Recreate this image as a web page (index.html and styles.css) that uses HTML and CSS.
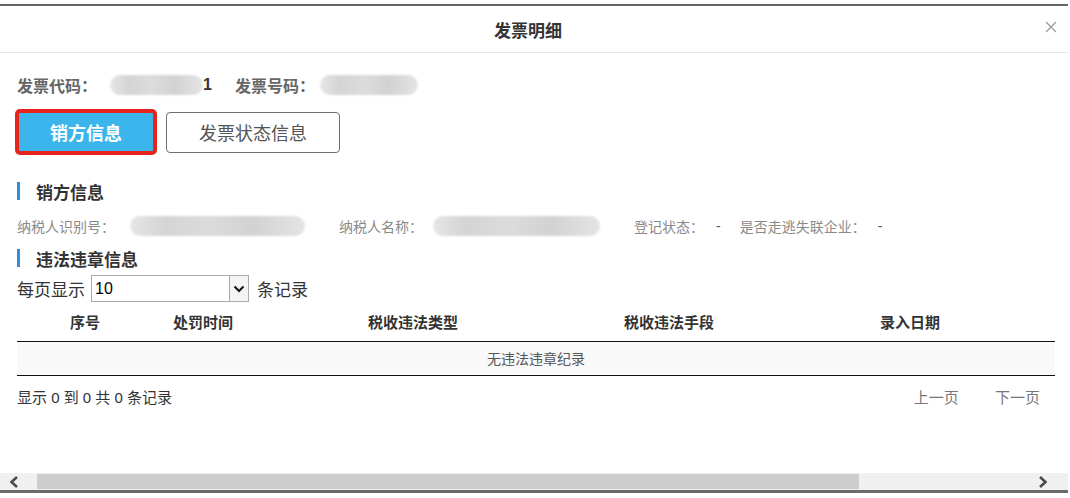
FILE: index.html
```html
<!DOCTYPE html>
<html lang="zh-CN">
<head>
    <meta charset="UTF-8">
    <meta name="viewport" content="width=device-width, initial-scale=1.0">
    <title>发票明细</title>
    <link rel="stylesheet" href="styles.css">
</head>
<body>
    <div class="page">
        <div class="dialog">
            <div class="dialog-header">
                <h2 class="dialog-title">发票明细</h2>
                <span class="dialog-close">
                    <svg width="12" height="12" viewBox="0 0 12 12"><path d="M1 1L11 11M11 1L1 11" stroke="#9a9a9a" stroke-width="1.3" fill="none"/></svg>
                </span>
            </div>

            <div class="dialog-body">
                <div class="code-row">
                    <span class="code-label">发票代码：</span>
                    <span class="mask mask-code"></span>
                    <span class="code-tail">1</span>
                    <span class="code-label code-label-2">发票号码：</span>
                    <span class="mask mask-number"></span>
                </div>

                <div class="tabs">
                    <button class="tab tab-active">销方信息</button>
                    <button class="tab">发票状态信息</button>
                </div>

                <div class="section-title">销方信息</div>
                <div class="info-row">
                    <span class="info-label">纳税人识别号：</span>
                    <span class="mask mask-taxid"></span>
                    <span class="info-label">纳税人名称：</span>
                    <span class="mask mask-name"></span>
                    <span class="info-label">登记状态：</span>
                    <span class="info-value">-</span>
                    <span class="info-label">是否走逃失联企业：</span>
                    <span class="info-value">-</span>
                </div>

                <div class="section-title section-title-2">违法违章信息</div>
                <div class="page-size">
                    <span>每页显示</span>
                    <div class="select">
                        <span class="select-value">10</span>
                        <span class="select-arrow">
                            <svg width="12" height="8" viewBox="0 0 12 8"><path d="M1.5 1.5L6 6L10.5 1.5" stroke="#111" stroke-width="2" fill="none"/></svg>
                        </span>
                    </div>
                    <span>条记录</span>
                </div>

                <table class="grid">
                    <colgroup>
                        <col style="width: 136px">
                        <col style="width: 100px">
                        <col style="width: 320px">
                        <col style="width: 192px">
                        <col style="width: 290px">
                    </colgroup>
                    <thead>
                        <tr>
                            <th>序号</th>
                            <th>处罚时间</th>
                            <th>税收违法类型</th>
                            <th>税收违法手段</th>
                            <th>录入日期</th>
                        </tr>
                    </thead>
                    <tbody>
                        <tr>
                            <td colspan="5" class="empty">无违法违章纪录</td>
                        </tr>
                    </tbody>
                </table>

                <div class="grid-footer">
                    <span class="grid-info">显示 0 到 0 共 0 条记录</span>
                    <span class="pager">
                        <a class="pager-link">上一页</a>
                        <a class="pager-link">下一页</a>
                    </span>
                </div>
            </div>

            <div class="hscroll">
                <span class="hscroll-btn">
                    <svg width="10" height="12" viewBox="0 0 10 12"><path d="M8 1L2.5 6L8 11" stroke="#4a4a4a" stroke-width="2.6" fill="none"/></svg>
                </span>
                <span class="hscroll-thumb"></span>
                <span class="hscroll-space"></span>
                <span class="hscroll-btn hscroll-btn-right">
                    <svg width="10" height="12" viewBox="0 0 10 12"><path d="M2 1L7.5 6L2 11" stroke="#4a4a4a" stroke-width="2.6" fill="none"/></svg>
                </span>
            </div>
        </div>
    </div>
</body>
</html>
```

FILE: styles.css
```css
* {
    box-sizing: border-box;
}

body {
    margin: 0;
    background: #fff;
    font-family: "Liberation Sans", "Noto Sans CJK SC", sans-serif;
    color: #333;
}

.page {
    padding-top: 4px;
}

.dialog {
    width: 1068px;
    height: 489px;
    display: flex;
    flex-direction: column;
    background: #fff;
    border-top: 2px solid #666;
    border-bottom: 3px solid #6a6a6a;
}

.dialog-header {
    position: relative;
    height: 47px;
    padding-right: 12px;
    border-bottom: 1px solid #e5e5e5;
    display: flex;
    align-items: center;
    justify-content: center;
}

.dialog-title {
    margin: 0;
    font-size: 17px;
    font-weight: bold;
    color: #333;
}

.dialog-close {
    position: absolute;
    right: 11px;
    top: 15px;
    width: 12px;
    height: 12px;
    display: flex;
}

.dialog-body {
    flex: 1;
    padding: 0 13px 0 17px;
}

/* 发票代码 / 号码 */
.code-row {
    margin-top: 20px;
    height: 24px;
    display: flex;
    align-items: center;
    font-size: 16px;
    font-weight: bold;
    color: #666;
}

.code-tail {
    color: #333;
}

.code-label-2 {
    margin-left: 23px;
}

.mask {
    display: inline-block;
    height: 20px;
    border-radius: 10px;
    background: linear-gradient(90deg, #e6e6e6 0%, #d4d4d4 20%, #dcdcdc 45%, #d2d2d2 70%, #e4e4e4 100%);
    filter: blur(1.2px);
}

.mask-code {
    width: 93px;
    margin-left: 13px;
}

.mask-number {
    width: 98px;
    margin-left: 5px;
}

/* 标签按钮 */
.tabs {
    margin-top: 12px;
    margin-left: -2px;
    display: flex;
    align-items: center;
}

.tab {
    height: 41px;
    width: 174px;
    margin-left: 9px;
    border: 1px solid #707070;
    border-radius: 4px;
    background: #fff;
    color: #555;
    font-family: "Noto Sans CJK SC", sans-serif;
    font-size: 18px;
    padding: 0;
}

.tab-active {
    width: 142px;
    height: 46px;
    margin-left: 0;
    border: 4px solid #e8231b;
    border-radius: 5px;
    background: #3cb5ec;
    color: #fff;
    font-weight: bold;
}

/* 小标题 */
.section-title {
    margin-top: 24px;
    height: 24px;
    display: flex;
    align-items: center;
    font-size: 17px;
    font-weight: bold;
    color: #333;
}

.section-title::before {
    content: '';
    width: 3px;
    height: 18px;
    background: #2f8fdc;
    margin-right: 16px;
}

.section-title-2 {
    margin-top: 10px;
}

.info-row {
    margin-top: 13px;
    height: 20px;
    display: flex;
    align-items: center;
    font-size: 14px;
    color: #8a8a8a;
}

.info-value {
    color: #555;
    margin-left: 12px;
    margin-right: 19px;
}

.mask-taxid {
    width: 175px;
    margin-left: 15px;
    margin-right: 34px;
}

.mask-name {
    width: 167px;
    margin-left: 10px;
    margin-right: 34px;
}

/* 每页显示 */
.page-size {
    margin-top: 5px;
    height: 27px;
    display: flex;
    align-items: center;
    font-size: 17px;
    color: #333;
}

.select {
    width: 158px;
    height: 27px;
    margin: 0 8px 0 6px;
    border: 1px solid #a9a9a9;
    display: flex;
    align-items: center;
    background: #fff;
}

.select-value {
    flex: 1;
    padding-left: 3px;
    font-size: 16px;
    color: #000;
}

.select-arrow {
    width: 19px;
    height: 25px;
    border-left: 1px solid #a9a9a9;
    background: #f4f4f4;
    display: flex;
    align-items: center;
    justify-content: center;
}

/* 表格 */
.grid {
    width: 1038px;
    border-collapse: collapse;
    table-layout: fixed;
}

.grid th {
    height: 39px;
    padding: 0;
    font-size: 15px;
    font-weight: bold;
    color: #333;
    text-align: center;
    border-bottom: 1px solid #111;
}

.grid td {
    height: 34px;
    padding: 0;
    border-bottom: 1px solid #111;
}

.empty {
    background: #f9f9f9;
    text-align: center;
    font-size: 14px;
    color: #555;
}

.grid-footer {
    margin-top: 11px;
    height: 20px;
    display: flex;
    align-items: center;
    justify-content: space-between;
    font-size: 15px;
    padding-right: 15px;
}

.grid-info {
    color: #333;
}

.pager-link {
    color: #777;
    margin-left: 32px;
}

/* 横向滚动条 */
.hscroll {
    height: 17px;
    display: flex;
    background: #f0f0f0;
}

.hscroll-btn {
    width: 37px;
    display: flex;
    align-items: center;
    justify-content: center;
    padding-right: 10px;
}

.hscroll-btn-right {
    justify-content: flex-start;
    padding-right: 0;
    padding-left: 7px;
}

.hscroll-thumb {
    width: 822px;
    margin: 1px 0;
    background: #cdcdcd;
}

.hscroll-space {
    flex: 1;
}
```
